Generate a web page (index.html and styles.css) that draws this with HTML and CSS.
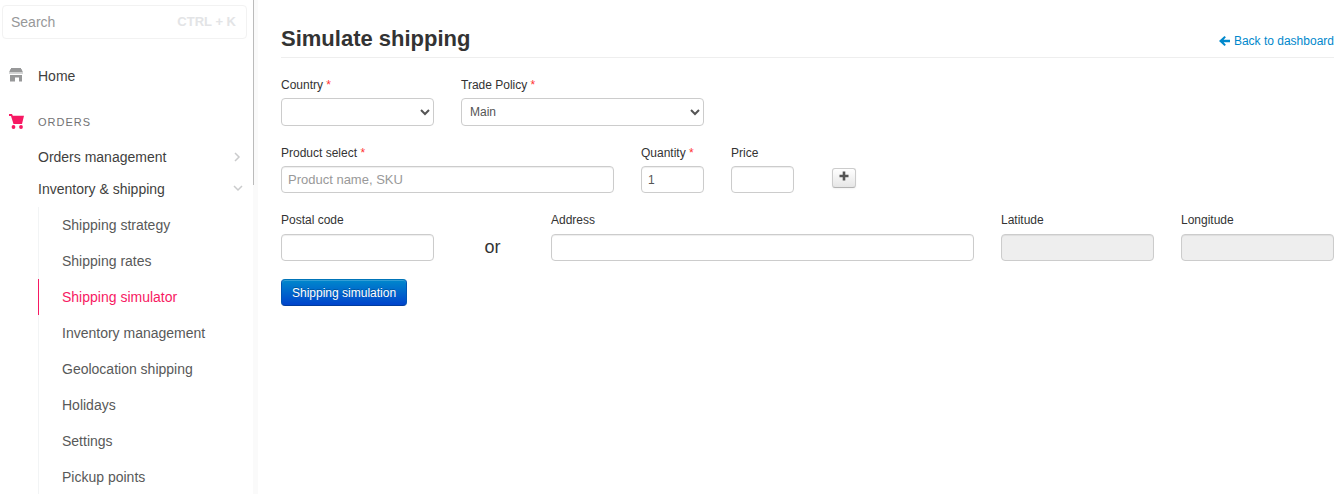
FILE: index.html
```html
<!DOCTYPE html>
<html lang="en">
<head>
<meta charset="utf-8">
<meta name="viewport" content="width=device-width, initial-scale=1">
<title>Simulate shipping</title>
<link rel="stylesheet" href="styles.css">
</head>
<body>
<div class="app">
  <aside class="sidebar">
    <label class="search">
      <input class="search-input" type="search" placeholder="Search" aria-label="Search">
      <span class="search-hint">CTRL + K</span>
    </label>
    <nav class="nav" aria-label="Main">
      <a class="nav-home" href="#">
        <svg class="nav-icon" viewBox="0 0 16 16" aria-hidden="true"><path fill="#979899" d="M3 0h10v1H3zM2.500 1h11l1.500 3.500H1zM2 7h12v6.500h-3V9.500H7v4H2z"/><path fill="#d5d6d7" d="M1 4.500h14V6H1z"/></svg>
        <span>Home</span>
      </a>
      <div class="nav-heading">
        <svg class="nav-icon" viewBox="0 0 16 16" aria-hidden="true"><path fill="#f71963" d="M1 0h3l.8 1.800H16L14 10H5.500L3 2H1z"/><circle cx="5.500" cy="13" r="1.900" fill="#f71963"/><circle cx="13" cy="13" r="1.900" fill="#f71963"/></svg>
        <span>ORDERS</span>
      </div>
      <a class="nav-group" href="#"><span>Orders management</span>
        <svg class="chevron" viewBox="0 0 10 10" aria-hidden="true"><path d="M2 1l4 4-4 4"/></svg></a>
      <a class="nav-group" href="#"><span>Inventory &amp; shipping</span>
        <svg class="chevron" viewBox="0 0 10 10" aria-hidden="true"><path d="M1 2l4 4 4-4"/></svg></a>
      <div class="subnav">
        <a class="subnav-item" href="#">Shipping strategy</a>
        <a class="subnav-item" href="#">Shipping rates</a>
        <a class="subnav-item active" href="#" aria-current="page">Shipping simulator</a>
        <a class="subnav-item" href="#">Inventory management</a>
        <a class="subnav-item" href="#">Geolocation shipping</a>
        <a class="subnav-item" href="#">Holidays</a>
        <a class="subnav-item" href="#">Settings</a>
        <a class="subnav-item" href="#">Pickup points</a>
      </div>
    </nav>
    <div class="scroll-thumb"></div>
  </aside>
  <main class="content">
    <header class="page-header">
      <h1 class="title">Simulate shipping</h1>
      <a class="back" href="#">
        <svg class="back-icon" viewBox="0 0 12 12" aria-hidden="true"><path fill="#08c" d="M0 6l6-5.500 1.500 1.500L5 4.700h7v2.600H5L7.500 10 6 11.500z"/></svg>
        <span>Back to dashboard</span>
      </a>
    </header>
    <form class="form">
      <div class="row">
        <div class="field span-2">
          <label for="country">Country <span class="required">*</span></label>
          <select class="control" id="country"><option></option></select>
        </div>
        <div class="field span-3">
          <label for="policy">Trade Policy <span class="required">*</span></label>
          <select class="control" id="policy"><option>Main</option></select>
        </div>
      </div>
      <div class="row">
        <div class="field span-4">
          <label for="product">Product select <span class="required">*</span></label>
          <input class="control product" id="product" type="text" placeholder="Product name, SKU">
        </div>
        <div class="field">
          <label for="quantity">Quantity <span class="required">*</span></label>
          <input class="control" id="quantity" type="text" value="1">
        </div>
        <div class="field">
          <label for="price">Price</label>
          <input class="control" id="price" type="text">
        </div>
        <div class="add-cell">
          <button class="add" type="button" aria-label="Add product">
            <svg class="add-icon" viewBox="0 0 10 10" aria-hidden="true"><path fill="#555" d="M3.700.5h2.600v3.200h3.200v2.600H6.300v3.200H3.700V6.300H.5V3.700h3.200z"/></svg>
          </button>
        </div>
      </div>
      <div class="row location">
        <div class="field span-2">
          <label for="postal">Postal code</label>
          <input class="control" id="postal" type="text">
        </div>
        <div class="or">or</div>
        <div class="field span-5">
          <label for="address">Address</label>
          <input class="control" id="address" type="text">
        </div>
        <div class="field span-2">
          <label for="latitude">Latitude</label>
          <input class="control" id="latitude" type="text" disabled>
        </div>
        <div class="field span-2">
          <label for="longitude">Longitude</label>
          <input class="control" id="longitude" type="text" disabled>
        </div>
      </div>
      <button class="submit" type="button">Shipping simulation</button>
    </form>
  </main>
</div>
</body>
</html>
```
FILE: styles.css
```css
* { box-sizing: border-box; }

body {
  margin: 0;
  background: #fff;
  color: #333;
  font: 12px/18px "Liberation Sans", Arial, sans-serif;
}

a { text-decoration: none; }

input, select, button { font-family: inherit; }

.app {
  display: flex;
  min-height: 100vh;
}

.sidebar {
  position: relative;
  flex: 0 0 258px;
  padding: 5px 6px 0 2px;
  border-right: 5px solid #fafafa;
}

.scroll-thumb {
  position: absolute;
  top: 0;
  right: -1px;
  width: 1px;
  height: 185px;
  background: #bbb;
}

.search {
  display: flex;
  align-items: center;
  height: 34px;
  padding: 0 10px 0 8px;
  border: 1px solid #f2f2f2;
  border-radius: 4px;
}

.search-input {
  flex: 1;
  min-width: 0;
  padding: 0;
  border: 0;
  outline: 0;
  background: none;
  font-size: 14px;
}

.search-input::placeholder { color: #979899; opacity: 1; }

.search-hint {
  color: #e3e4e6;
  font-size: 13px;
  font-weight: bold;
}

.nav {
  padding-top: 21px;
  font-size: 14px;
}

.nav-home, .nav-heading {
  display: flex;
  align-items: center;
  gap: 14px;
  height: 32px;
  padding-left: 6px;
  color: #3f3f40;
}

.nav-heading {
  margin: 14px 0 3px;
  color: #727273;
  font-size: 11px;
  letter-spacing: 1px;
}

.nav-icon { width: 16px; height: 16px; }

.nav-group {
  display: flex;
  align-items: center;
  justify-content: space-between;
  height: 32px;
  padding: 0 4px 0 36px;
  color: #3f3f40;
}

.chevron {
  width: 10px;
  height: 10px;
  fill: none;
  stroke: #cacbcc;
  stroke-width: 1.500;
}

.subnav {
  margin: 2px 0 0 36px;
}

.subnav-item {
  display: flex;
  align-items: center;
  height: 36px;
  padding-left: 23px;
  border-left: 1px solid #f2f4f5;
  color: #585959;
}

.subnav-item.active {
  border-color: #f71963;
  color: #f71963;
}

.content {
  flex: 1;
  min-width: 0;
  padding: 20px 6px 20px 23px;
}

.page-header {
  display: flex;
  align-items: center;
  justify-content: space-between;
  height: 38px;
  border-bottom: 1px solid #eee;
}

.title {
  margin: 0;
  font-size: 22px;
  line-height: 36px;
}

.back {
  display: flex;
  align-items: center;
  gap: 4px;
  padding-top: 4px;
  color: #08c;
}

.back-icon {
  width: 11px;
  height: 12px;
}

.form { padding-top: 18px; }

.row {
  display: grid;
  grid-template-columns: repeat(12, minmax(0, 1fr));
  gap: 27px;
  margin-bottom: 18px;
}

.field {
  display: flex;
  flex-direction: column;
  gap: 4px;
}

.location .field { gap: 5px; }

.span-2 { grid-column: span 2; }
.span-3 { grid-column: span 3; }
.span-4 { grid-column: span 4; }
.span-5 { grid-column: span 5; }

.required { color: #f33; }

.control {
  width: 100%;
  height: 27px;
  padding: 4px 6px;
  border: 1px solid #ccc;
  border-radius: 4px;
  background: #fff;
  color: #555;
  font-size: 12px;
  box-shadow: inset 0 1px 1px rgba(0, 0, 0, .07);
}

select.control {
  height: 28px;
  padding: 4px;
  box-shadow: none;
}

.product { font-size: 13px; }

.control::placeholder { color: #999; opacity: 1; }

.control:disabled { background: #eee; }

.add-cell {
  display: flex;
  align-items: flex-end;
  padding: 0 0 5px 11px;
}

.add {
  display: flex;
  justify-content: center;
  width: 24px;
  height: 20px;
  padding: 2px 0 0;
  border: 1px solid #ccc;
  border-bottom-color: #b3b3b3;
  border-radius: 3px;
  background: linear-gradient(#fff, #e6e6e6);
  box-shadow: 0 1px 2px rgba(0, 0, 0, .05);
}

.add-icon { width: 10px; height: 10px; }

.or {
  padding-top: 27px;
  font-size: 18px;
  text-align: center;
}

.submit {
  height: 27px;
  padding: 0 10px;
  border: 1px solid #04a;
  border-color: #0074b8 #0055b3 #003c9e;
  border-radius: 4px;
  background: linear-gradient(#08c, #04c);
  color: #fff;
  font-size: 12px;
  text-shadow: 0 -1px 0 rgba(0, 0, 0, .25);
  box-shadow: inset 0 1px 0 rgba(255, 255, 255, .2);
}
```
